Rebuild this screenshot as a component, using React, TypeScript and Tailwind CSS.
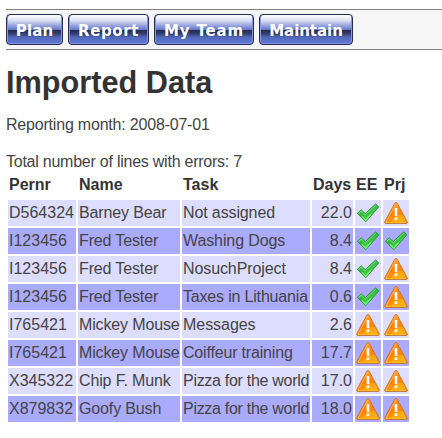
import React from "react";

type Status = "ok" | "warn";
type Row = {
  pernr: string;
  name: string;
  task: string;
  taskTracking: string;
  days: string;
  ee: Status;
  prj: Status;
};

const rows: Row[] = [
  { pernr: "D564324", name: "Barney Bear", task: "Not assigned", taskTracking: "tracking-[-0.12px]", days: "22.0", ee: "ok", prj: "warn" },
  { pernr: "I123456", name: "Fred Tester", task: "Washing Dogs", taskTracking: "tracking-[-0.1px]", days: "8.4", ee: "ok", prj: "ok" },
  { pernr: "I123456", name: "Fred Tester", task: "NosuchProject", taskTracking: "tracking-[-0.1px]", days: "8.4", ee: "ok", prj: "warn" },
  { pernr: "I123456", name: "Fred Tester", task: "Taxes in Lithuania", taskTracking: "tracking-[-0.18px]", days: "0.6", ee: "ok", prj: "warn" },
  { pernr: "I765421", name: "Mickey Mouse", task: "Messages", taskTracking: "tracking-[-0.05px]", days: "2.6", ee: "warn", prj: "warn" },
  { pernr: "I765421", name: "Mickey Mouse", task: "Coiffeur training", taskTracking: "tracking-[-0.18px]", days: "17.7", ee: "warn", prj: "warn" },
  { pernr: "X345322", name: "Chip F. Munk", task: "Pizza for the world", taskTracking: "tracking-[-0.29px]", days: "17.0", ee: "warn", prj: "warn" },
  { pernr: "X879832", name: "Goofy Bush", task: "Pizza for the world", taskTracking: "tracking-[-0.29px]", days: "18.0", ee: "warn", prj: "warn" },
];

const tabs = [
  { label: "Plan", size: "w-[57px] tracking-[0.1px]" },
  { label: "Report", size: "w-[81px] tracking-[0.6px]" },
  { label: "My Team", size: "w-[100px] tracking-[0.85px]" },
  { label: "Maintain", size: "w-[94px] tracking-[-0.05px]" },
];

function Gradients() {
  return (
    <svg width="0" height="0" className="absolute">
      <defs>
        <linearGradient id="green" x1="0" y1="0" x2="0.8" y2="1">
          <stop offset="0" stopColor="#8af092" />
          <stop offset="0.45" stopColor="#2fb83a" />
          <stop offset="1" stopColor="#5df05d" />
        </linearGradient>
        <linearGradient id="orange" x1="0" y1="0" x2="0.3" y2="1">
          <stop offset="0" stopColor="#ffad3a" />
          <stop offset="0.6" stopColor="#ff8200" />
          <stop offset="1" stopColor="#ff9d10" />
        </linearGradient>
      </defs>
    </svg>
  );
}

function StatusIcon({ status }: { status: Status }) {
  if (status === "ok") {
    return (
      <svg viewBox="0 0 24 24" className="block h-6 w-6">
        <path d="M1.400 12.300 5.200 8.800 9.200 12.600 19.700 2.900 22.800 5.900 9.700 20.800Z" fill="url(#green)" stroke="#2a8a33" strokeWidth="0.9" strokeLinejoin="round" />
        <path d="M2.900 12.100 5.200 10 9.200 13.900 19.700 4.200" fill="none" stroke="#b9f5bd" strokeWidth="0.7" opacity="0.8" />
        <path d="m5.800 15.400 3.900 3.900 5-5.700" fill="none" stroke="#78f873" strokeWidth="1.200" />
      </svg>
    );
  }
  return (
    <svg viewBox="0 0 24 24" className="block h-6 w-6">
      <path d="M12 1.400c.6 0 1 .3 1.300.9l9.900 18.400c.5 1-.1 1.800-1 1.800H1.800c-.9 0-1.500-.8-1-1.800l9.900-18.400c.3-.6.7-.9 1.300-.9Z" fill="url(#orange)" stroke="#c7682f" strokeWidth="0.8" />
      <path d="M11.900 2.700 2.100 21" fill="none" stroke="#ffc184" strokeWidth="0.6" />
      <path d="M8 21c1-5 5-7.500 11.200-6.500l3 6.500Z" fill="#ffc21c" opacity="0.45" />
      <path d="M2 21.500h20" stroke="#ffc52e" strokeWidth="0.8" />
      <path d="M10.700 7h2.600v8h-2.600zM10.700 16.500h2.600V19h-2.600z" fill="#fff" />
    </svg>
  );
}

function Tab({ label, size }: { label: string; size: string }) {
  return (
    <button
      className={`${size} h-[31px] shrink-0 rounded-[4px] border border-[#252b52] bg-[linear-gradient(to_bottom,#ffffff_0%,#dfe3f6_18%,#8795d8_41%,#6376c6_51%,#242a49_52%,#343d6c_64%,#5268bb_77%,#6079d7_100%)] text-center font-['DejaVu_Sans',sans-serif] text-[15px] leading-[33px] font-bold whitespace-nowrap text-white shadow-[inset_1px_0_#8c9be1,inset_-1px_-1px_#8193e0]`}
    >
      {label}
    </button>
  );
}

export default function App() {
  return (
    <div className="h-[438px] w-[442px] overflow-hidden bg-white pt-[9px] pl-[6px] font-['Liberation_Sans',Arial,sans-serif] text-base text-[#444]">
      <Gradients />
      <nav className="flex h-[41px] gap-[5px] border-y border-[#808080] bg-[#f6f6f6] pt-1">
        {tabs.map((t) => (
          <Tab key={t.label} {...t} />
        ))}
      </nav>
      <h1 className="mt-[15px] h-9 text-[30.7px] leading-9 font-bold text-[#333]">Imported Data</h1>
      <p className="mt-[15px] h-[18px] leading-[18px] tracking-[-0.2px]">Reporting month: 2008-07-01</p>
      <p className="mt-[19px] h-[18px] leading-[18px] tracking-[-0.24px]">Total number of lines with errors: 7</p>
      <table className="w-[405px] table-fixed border-separate border-spacing-[2px] text-left leading-[18px]">
        <colgroup>
          <col className="w-[68px]" />
          <col className="w-[102px]" />
          <col className="w-[128px]" />
          <col className="w-[41px]" />
          <col className="w-[26px]" />
          <col className="w-[26px]" />
        </colgroup>
        <thead>
          <tr className="h-[25px] whitespace-nowrap text-[#333]">
            {["Pernr", "Name", "Task", "Days", "EE", "Prj"].map((h) => (
              <th key={h} className="px-px pt-px pb-0.5 font-bold">{h}</th>
            ))}
          </tr>
        </thead>
        <tbody>
          {rows.map((r, i) => (
            <tr key={i} className={`h-[26px] whitespace-nowrap ${i % 2 ? "bg-[#aaaaff]" : "bg-[#ddddff]"}`}>
              <td className="px-px py-0">{r.pernr}</td>
              <td className="px-px py-0 tracking-[-0.14px]">{r.name}</td>
              <td className={`px-px py-0 ${r.taskTracking}`}>{r.task}</td>
              <td className="px-px py-0 text-right">{r.days}</td>
              <td className="p-px"><StatusIcon status={r.ee} /></td>
              <td className="p-px"><StatusIcon status={r.prj} /></td>
            </tr>
          ))}
        </tbody>
      </table>
    </div>
  );
}
